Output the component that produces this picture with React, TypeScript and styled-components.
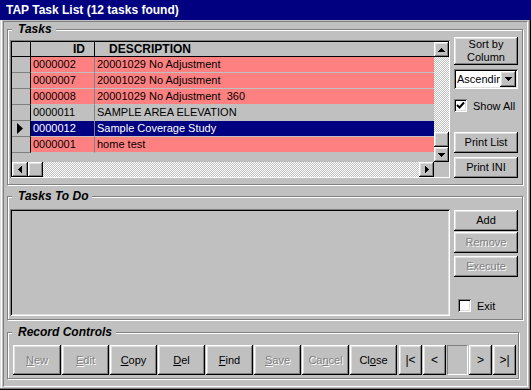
import React from 'react';
import styled, { createGlobalStyle, css } from 'styled-components';

// ---- classic 3D edges ----

const raised = css`
  box-shadow: inset -1px -1px #000, inset 1px 1px #fff, inset -2px -2px #808080,
    inset 2px 2px #dfdfdf;
`;

const sunken = css`
  box-shadow: inset 1px 1px #808080, inset -1px -1px #fff, inset 2px 2px #000,
    inset -2px -2px #dfdfdf;
`;

const GlobalStyle = createGlobalStyle`
  html, body { margin: 0; padding: 0; background: #c0c0c0; }
  body {
    font-family: Arial, "Liberation Sans", sans-serif;
    font-size: 11px;
    color: #000;
  }
  * { box-sizing: border-box; }
`;

const Window = styled.div`
  width: 531px;
  height: 390px;
  display: flex;
  flex-direction: column;
  background: #c0c0c0;
  overflow: hidden;
`;

const TitleBar = styled.div`
  height: 20px;
  padding: 0 6px;
  display: flex;
  align-items: center;
  background: #000080;
  color: #fff;
  font-weight: bold;
  font-size: 12px;
`;

const Frame = styled.div`
  flex: 1;
  display: flex;
  padding: 1px 3px 3px 3px;
  box-shadow: inset -1px -1px #000, inset -2px -2px #808080, inset 1px 0 #dfdfdf,
    inset 2px 0 #fff;
`;

const Panel = styled.div`
  flex: 1;
  display: flex;
  flex-direction: column;
  align-items: flex-start;
  border: 1px solid;
  border-color: #808080 #fff #fff #808080;
  padding: 7px 0 0 3px;
`;

const Group = styled.div<{ $width: number; $top?: number; $pad: string }>`
  position: relative;
  display: flex;
  gap: 4px;
  width: ${(p) => p.$width}px;
  margin-top: ${(p) => p.$top ?? 0}px;
  padding: ${(p) => p.$pad};
  border: 1px solid #808080;
  box-shadow: inset 1px 1px #fff, 1px 1px #fff;
`;

const Legend = styled.span`
  position: absolute;
  top: -8px;
  left: 4px;
  padding: 0 4px 0 6px;
  background: #c0c0c0;
  font-style: italic;
  font-weight: bold;
  font-size: 12px;
  line-height: 14px;
`;

// ---- grid ----

const GridBox = styled.div`
  width: 440px;
  height: 138px;
  margin-top: 3px;
  padding: 2px 1px 1px 2px;
  display: grid;
  grid-template-columns: 1fr 15px;
  grid-template-rows: 1fr 15px;
  ${sunken};
`;

const Table = styled.div`
  display: flex;
  flex-direction: column;
  background: #c0c0c0;
  overflow: hidden;
`;

const Row = styled.div`
  display: grid;
  grid-template-columns: 19px 64px 1fr;
  height: 16px;
`;

const HeaderRow = styled(Row)`
  height: 15px;
  border-bottom: 1px solid #000;
  font-weight: bold;
  font-size: 12px;
  line-height: 14px;
`;

const HeadCell = styled.div<{ $align?: 'left' | 'right'; $pad?: number }>`
  border-right: 1px solid #000;
  text-align: ${(p) => p.$align ?? 'left'};
  padding: 0 ${(p) => (p.$align === 'right' ? p.$pad ?? 0 : 0)}px 0
    ${(p) => (p.$align === 'right' ? 0 : p.$pad ?? 0)}px;

  &:last-child {
    border-right: none;
  }
`;

const Indicator = styled.div`
  display: flex;
  align-items: center;
  padding-left: 5px;
  border-right: 1px solid #000;
  border-bottom: 1px solid #808080;
`;

type Tone = 'pink' | 'plain' | 'selected';

const toneBg: Record<Tone, string> = {
  pink: '#ff8080',
  plain: '#c0c0c0',
  selected: '#000080',
};

const DataCell = styled.div<{ $tone: Tone }>`
  padding-left: 2px;
  line-height: 15px;
  white-space: pre;
  overflow: hidden;
  background: ${(p) => toneBg[p.$tone]};
  color: ${(p) => (p.$tone === 'selected' ? '#fff' : '#000')};
  border-bottom: 1px solid #c0c0c0;
  border-right: 1px solid #808080;

  &:last-child {
    border-right: none;
  }
`;

const checker = css`
  background-color: #c0c0c0;
  background-image: conic-gradient(#fff 25%, #c0c0c0 0 50%, #fff 0 75%, #c0c0c0 0);
  background-size: 2px 2px;
`;

const VScroll = styled.div`
  display: flex;
  flex-direction: column;
`;

const HScroll = styled.div`
  display: flex;
`;

const Track = styled.div`
  flex: 1;
  ${checker};
`;

const ScrollButton = styled.div<{ $w?: number; $h?: number }>`
  flex: none;
  width: ${(p) => p.$w ?? 15}px;
  height: ${(p) => p.$h ?? 15}px;
  display: flex;
  align-items: center;
  justify-content: center;
  background: #c0c0c0;
  ${raised};
`;

const Corner = styled.div`
  background: #c0c0c0;
`;

// ---- side controls ----

const SideColumn = styled.div`
  width: 64px;
  display: flex;
  flex-direction: column;
`;

const Button = styled.button<{ $w?: number; $h?: number; $top?: number; $size?: number }>`
  flex: none;
  width: ${(p) => (p.$w ? `${p.$w}px` : '100%')};
  height: ${(p) => p.$h ?? 21}px;
  margin-top: ${(p) => p.$top ?? 0}px;
  padding: 0;
  border: none;
  background: #c0c0c0;
  font-family: Arial, "Liberation Sans", sans-serif;
  font-size: ${(p) => p.$size ?? 11}px;
  line-height: 13px;
  color: #000;
  ${raised};

  &:disabled {
    color: #808080;
    text-shadow: 1px 1px #fff;
  }

  u {
    text-underline-offset: 1px;
  }
`;

const Select = styled.div`
  height: 20px;
  margin-top: 4px;
  padding: 2px;
  display: flex;
  background: #fff;
  ${sunken};
`;

const SelectText = styled.div`
  flex: 1;
  padding-left: 1px;
  font-size: 11px;
  line-height: 16px;
  overflow: hidden;
  white-space: nowrap;
`;

const CheckRow = styled.label<{ $top?: number; $indent?: number; $bottom?: number }>`
  display: flex;
  align-items: center;
  gap: 6px;
  margin-top: ${(p) => p.$top ?? 0}px;
  margin-bottom: ${(p) => p.$bottom ?? 0}px;
  padding-left: ${(p) => p.$indent ?? 0}px;
  font-size: 11px;
`;

const CheckBox = styled.span`
  width: 13px;
  height: 13px;
  display: inline-flex;
  align-items: center;
  justify-content: center;
  background: #fff;
  ${sunken};
`;

const Spacer = styled.div`
  flex: 1;
`;

const ListBox = styled.div`
  width: 440px;
  height: 107px;
  background: #c0c0c0;
  ${sunken};
`;

const ButtonRow = styled.div`
  display: flex;
  gap: 1px;
`;

const NavSet = styled.div`
  display: flex;
  gap: 1px;
  margin-left: 1px;
`;

const RecordField = styled.div`
  width: 21px;
  height: 30px;
  border: 1px solid;
  border-color: #808080 #fff #fff #808080;
`;

// ---- glyphs ----

const Arrow = ({ dir }: { dir: 'up' | 'down' | 'left' | 'right' }) => {
  const vertical = dir === 'up' || dir === 'down';
  const w = vertical ? 7 : 4;
  const h = vertical ? 4 : 7;
  const pts = {
    up: '0,4 7,4 3.5,0',
    down: '0,0 7,0 3.5,4',
    left: '4,0 4,7 0,3.5',
    right: '0,0 0,7 4,3.5',
  }[dir];
  return (
    <svg width={w} height={h} viewBox={`0 0 ${w} ${h}`} shapeRendering="crispEdges">
      <polygon points={pts} fill="#000" />
    </svg>
  );
};

const RowPointer = () => (
  <svg width="6" height="11" viewBox="0 0 6 11">
    <polygon points="0,0 0,11 6,5.5" fill="#000" />
  </svg>
);

const Tick = () => (
  <svg width="9" height="9" viewBox="0 0 9 9">
    <path d="M1 4 L3.5 6.5 L8 1.5" stroke="#000" strokeWidth="2" fill="none" />
  </svg>
);

const tasks: { id: string; desc: string; tone: Tone }[] = [
  { id: '0000002', desc: '20001029 No Adjustment', tone: 'pink' },
  { id: '0000007', desc: '20001029 No Adjustment', tone: 'pink' },
  { id: '0000008', desc: '20001029 No Adjustment  360', tone: 'pink' },
  { id: '0000011', desc: 'SAMPLE AREA ELEVATION', tone: 'plain' },
  { id: '0000012', desc: 'Sample Coverage Study', tone: 'selected' },
  { id: '0000001', desc: 'home test', tone: 'pink' },
];

const App: React.FC = () => {
  return (
    <>
      <GlobalStyle />
      <Window>
        <TitleBar>TAP Task List (12 tasks found)</TitleBar>
        <Frame>
          <Panel>
            {/* Tasks */}
            <Group $width={516} $pad="7px 4px 6px 2px">
              <Legend>Tasks</Legend>
              <GridBox>
                <Table>
                  <HeaderRow>
                    <HeadCell />
                    <HeadCell $align="right" $pad={9}>ID</HeadCell>
                    <HeadCell $pad={14}>DESCRIPTION</HeadCell>
                  </HeaderRow>
                  {tasks.map((t) => (
                    <Row key={t.id}>
                      <Indicator>{t.tone === 'selected' && <RowPointer />}</Indicator>
                      <DataCell $tone={t.tone}>{t.id}</DataCell>
                      <DataCell $tone={t.tone}>{t.desc}</DataCell>
                    </Row>
                  ))}
                </Table>
                <VScroll>
                  <ScrollButton><Arrow dir="up" /></ScrollButton>
                  <Track />
                  <ScrollButton />
                  <ScrollButton><Arrow dir="down" /></ScrollButton>
                </VScroll>
                <HScroll>
                  <ScrollButton $w={16}><Arrow dir="left" /></ScrollButton>
                  <ScrollButton />
                  <Track />
                  <ScrollButton><Arrow dir="right" /></ScrollButton>
                </HScroll>
                <Corner />
              </GridBox>
              <SideColumn>
                <Button $h={28}>
                  Sort by
                  <br />
                  Column
                </Button>
                <Select>
                  <SelectText>Ascending</SelectText>
                  <ScrollButton $w={16} $h={16}><Arrow dir="down" /></ScrollButton>
                </Select>
                <CheckRow $top={10}>
                  <CheckBox><Tick /></CheckBox>
                  Show All
                </CheckRow>
                <Spacer />
                <Button>Print List</Button>
                <Button $top={4}>Print INI</Button>
              </SideColumn>
            </Group>

            {/* Tasks To Do */}
            <Group $width={516} $top={11} $pad="12px 4px 3px 2px">
              <Legend>Tasks To Do</Legend>
              <ListBox />
              <SideColumn>
                <Button $top={1}>Add</Button>
                <Button $top={1} disabled>Remove</Button>
                <Button $top={3} disabled>Execute</Button>
                <Spacer />
                <CheckRow $indent={4} $bottom={4}>
                  <CheckBox />
                  Exit
                </CheckRow>
              </SideColumn>
            </Group>

            {/* Record Controls */}
            <Group $width={512} $top={12} $pad="12px 4px 3px 5px">
              <Legend>Record Controls</Legend>
              <ButtonRow>
                <Button $w={48} $h={30} disabled><u>N</u>ew</Button>
                <Button $w={47} $h={30} disabled><u>E</u>dit</Button>
                <Button $w={47} $h={30}><u>C</u>opy</Button>
                <Button $w={47} $h={30}><u>D</u>el</Button>
                <Button $w={47} $h={30}><u>F</u>ind</Button>
                <Button $w={47} $h={30} disabled><u>S</u>ave</Button>
                <Button $w={47} $h={30} disabled>Ca<u>n</u>cel</Button>
                <Button $w={47} $h={30}>Cl<u>o</u>se</Button>
                <NavSet>
                  <Button $w={23} $h={30} $size={12}>|&lt;</Button>
                  <Button $w={23} $h={30} $size={12}>&lt;</Button>
                  <RecordField />
                  <Button $w={23} $h={30} $size={12}>&gt;</Button>
                  <Button $w={23} $h={30} $size={12}>&gt;|</Button>
                </NavSet>
              </ButtonRow>
            </Group>
          </Panel>
        </Frame>
      </Window>
    </>
  );
};

export default App;
